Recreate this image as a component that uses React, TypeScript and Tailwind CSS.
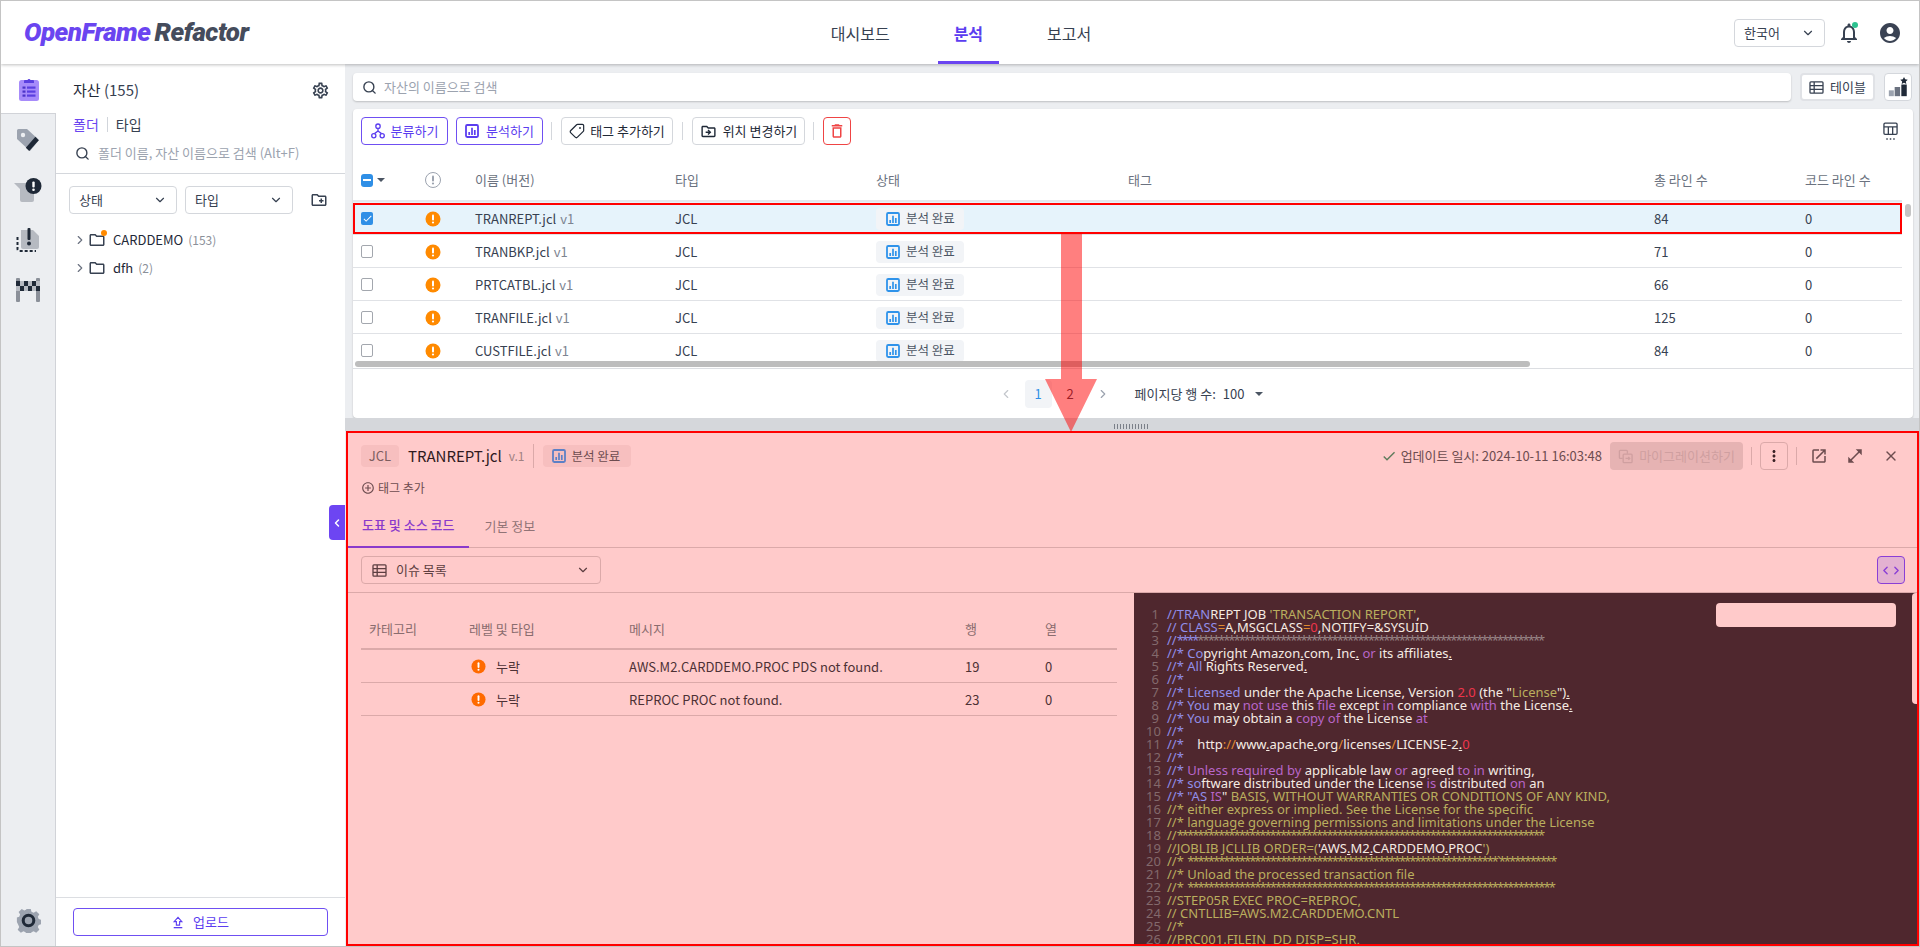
import React from 'react';
import { ChevronDown, ChevronLeft, ChevronRight, Search, Tag, X } from 'lucide-react';
import {
  MdAccountCircle,
  MdCheck,
  MdMoreVert,
  MdOpenInFull,
  MdOpenInNew,
  MdOutlineAddCircleOutline,
  MdOutlineCreateNewFolder,
  MdOutlineDelete,
  MdOutlineDriveFileMove,
  MdOutlineFolder,
  MdOutlineNotifications,
  MdOutlineSettings,
} from 'react-icons/md';

const FONT = '[font-family:"Noto_Sans_CJK_KR","Noto_Sans",sans-serif]';

type IconProps = { className?: string };

const AlertDot: React.FC<IconProps> = ({ className = 'w-4 h-4 ml-[2px] text-[#ff8a00]' }) => (
  <svg viewBox="0 0 16 16" className={className}>
    <circle cx="8" cy="8" r="7.5" fill="currentColor" />
    <rect x="7" y="3.5" width="2" height="6" rx="1" fill="#fff" />
    <circle cx="8" cy="11.5" r="1.1" fill="#fff" />
  </svg>
);

const BarsSquare: React.FC<IconProps> = ({ className = 'w-[14px] h-[14px] text-[#2f93ea]' }) => (
  <svg viewBox="0 0 14 14" className={className} fill="none">
    <rect x="1" y="1" width="12" height="12" rx="1.2" stroke="currentColor" strokeWidth="1.8" />
    <path d="M4.2 11V8M7 11V3.800M9.800 11V6" stroke="currentColor" strokeWidth="1.700" />
  </svg>
);

const TreeIcon: React.FC<IconProps> = ({ className }) => (
  <svg viewBox="0 0 16 18" className={className} fill="none" stroke="currentColor" strokeWidth="1.5">
    <circle cx="8" cy="3.5" r="2.5" />
    <circle cx="3.2" cy="14.5" r="2.4" />
    <circle cx="12.8" cy="14.5" r="2.4" />
    <path d="M8 6v3M4 12l4-3 4 3" />
  </svg>
);

const TableIcon: React.FC<IconProps> = ({ className }) => (
  <svg viewBox="0 0 16 14" className={className} fill="none" stroke="currentColor" strokeWidth="1.4">
    <rect x="1" y="1" width="14" height="12" rx="1" />
    <path d="M1 5h14M1 9h14M5.5 1v12" />
  </svg>
);

const ColumnsIcon: React.FC<IconProps> = ({ className }) => (
  <svg viewBox="0 0 16 20" className={className} fill="none" stroke="currentColor" strokeWidth="1.4">
    <rect x="1" y="1" width="14" height="12" rx="1.2" />
    <path d="M1 5h14M5.7 5v8M10.3 5v8" />
    <path d="M3.5 18h1.6M7.2 18h1.6M10.9 18h1.6" strokeWidth="1.6" />
  </svg>
);

const RankIcon: React.FC<IconProps> = ({ className }) => (
  <svg viewBox="0 0 24 24" className={className}>
    <rect x="1" y="16" width="6" height="7" fill="#9ca3af" />
    <rect x="8" y="12" width="6.500" height="11" fill="#6b7280" />
    <rect x="16" y="9" width="6.500" height="14" fill="#1f2937" />
    <path d="m19.200 0 1.400 2.800 3.100.4-2.300 2.200.6 3.100-2.800-1.500-2.800 1.500.6-3.100-2.300-2.200 3.100-.4z" fill="#1f2937" />
  </svg>
);

const UploadIcon: React.FC<IconProps> = ({ className }) => (
  <svg viewBox="0 0 14 14" className={className} fill="none" stroke="currentColor" strokeWidth="1.3">
    <path d="M7 1 2.5 6h2.6v4h3.8V6h2.6z" />
    <path d="M2 13h10" strokeWidth="1.5" />
  </svg>
);

const CopyMove: React.FC<IconProps> = ({ className }) => (
  <svg viewBox="0 0 16 16" className={className} fill="none" stroke="currentColor" strokeWidth="1.4">
    <path d="M10 5V2.5A1 1 0 0 0 9 1.5H2.5a1 1 0 0 0-1 1V9a1 1 0 0 0 1 1H5" />
    <rect x="5.5" y="5.5" width="9.5" height="9" rx="1" />
    <path d="M8 10h4.5M11 8.5l1.5 1.5L11 11.5" />
  </svg>
);

const ClipboardNav = () => (
  <svg viewBox="0 0 22 24" className="w-[22px] h-6">
    <rect x="1" y="3" width="20" height="21" rx="2.5" fill="#a78bfa" />
    <path d="M7 3h2.5a1.6 1.6 0 0 1 3 0H15a1 1 0 0 1 1 1v2H6V4a1 1 0 0 1 1-1z" fill="#5b3fe0" />
    <rect x="4.5" y="9.5" width="3" height="2.2" fill="#4c34c8" />
    <rect x="4.5" y="13.5" width="3" height="2.2" fill="#4c34c8" />
    <rect x="4.5" y="17.5" width="3" height="2.2" fill="#4c34c8" />
    <rect x="9" y="9.5" width="8.5" height="2.2" fill="#5b3fe0" />
    <rect x="9" y="13.5" width="8.5" height="2.2" fill="#5b3fe0" />
    <rect x="9" y="17.5" width="8.5" height="2.2" fill="#5b3fe0" />
  </svg>
);

const TagNav = () => (
  <svg viewBox="0 0 24 24" className="w-6 h-6">
    <path d="M1 2.500A1.500 1.500 0 0 1 2.500 1h8.500l12 11-9 11L1 11z" fill="#9ca3af" />
    <circle cx="7" cy="7" r="2.200" fill="#eceef1" />
    <path d="m13.200 23-3.400-3.200 9.600-11 3.400 3.400z" fill="#1f2937" />
  </svg>
);

const IssueNav = () => (
  <svg viewBox="0 0 28 24" className="w-7 h-6">
    <path d="M0 5h20v17a2 2 0 0 1-2 2H8a2 2 0 0 1-2-2V11z" fill="#b6bac1" />
    <circle cx="19.500" cy="8" r="8" fill="#1f2937" />
    <rect x="18.300" y="3.400" width="2.400" height="6" rx="1" fill="#fff" />
    <circle cx="19.500" cy="11.700" r="1.300" fill="#fff" />
  </svg>
);

const DashedNav = () => (
  <svg viewBox="0 0 24 24" className="w-6 h-6">
    <path d="M5 2h12l6 6v11a2 2 0 0 1-2 2H7a2 2 0 0 1-2-2z" fill="#b6bac1" />
    <path d="M1.500 9v12a2 2 0 0 0 2 2H20" fill="none" stroke="#1f2937" strokeWidth="2" strokeDasharray="3 2" />
    <rect x="11.500" y="0" width="3" height="12" rx="1" fill="#1f2937" />
    <circle cx="13" cy="15.500" r="2" fill="#1f2937" />
  </svg>
);

const FlagNav = () => (
  <svg viewBox="0 0 24 24" className="w-6 h-6">
    <rect x="0" y="0" width="4" height="24" rx="1" fill="#8b9099" />
    <rect x="20" y="0" width="4" height="24" rx="1" fill="#8b9099" />
    <rect x="0" y="3" width="24" height="10" fill="#b6bac1" />
    <path d="M0 3h4v5H0zM8 3h4v5H8zM16 3h4v5h-4zM4 8h4v5H4zM12 8h4v5h-4zM20 8h4v5h-4z" fill="#1f2937" />
  </svg>
);

const GearNav = () => (
  <svg viewBox="0 0 26 26" className="w-[25px] h-[25px]">
    <path
      d="M10.500 1h5l.8 3.200 2.400 1 2.900-1.700 3.500 3.600-1.700 2.800 1 2.500 2.600.7v5l-2.600.8-1 2.400 1.700 2.900-3.500 3.500-2.900-1.700-2.400 1-.8 2.500h-5l-.8-2.500-2.400-1-2.900 1.700-3.500-3.500 1.700-2.900-1-2.400L0 15.600v-5l2.600-.7 1-2.500L1.900 4.600l3.500-3.600 2.900 1.700 2.400-1z"
      fill="#9ca3af"
      transform="scale(.93) translate(1 0)"
    />
    <circle cx="13" cy="13" r="5.500" fill="none" stroke="#1f2937" strokeWidth="3.200" />
  </svg>
);

const railItems = [<TagNav key="t" />, <IssueNav key="i" />, <DashedNav key="d" />, <FlagNav key="f" />];

const StatusChip = () => (
  <span className="inline-flex items-center gap-[6px] w-[88px] h-[22px] pl-[10px] rounded bg-[#f2f4f7] text-[12.5px] text-[#4b5563]">
    <BarsSquare />
    분석 완료
  </span>
);

const SelectBox: React.FC<{ label: string; className: string }> = ({ label, className }) => (
  <div className={`flex items-center justify-between h-7 px-[9px] bg-white border border-[#d4d7dc] rounded text-[13px] text-[#374151] ${className}`}>
    {label}
    <ChevronDown className="w-[14px] h-[14px] text-[#374151]" strokeWidth={2} />
  </div>
);

const GRID = 'grid grid-cols-[70px_52px_200px_201px_252px_526px_151px_97px] items-center';
const ISSUE_GRID = 'grid grid-cols-[108px_160px_336px_80px_72px] items-center w-[756px]';

const assets = [
  { name: 'TRANREPT.jcl', lines: '84' },
  { name: 'TRANBKP.jcl', lines: '71' },
  { name: 'PRTCATBL.jcl', lines: '66' },
  { name: 'TRANFILE.jcl', lines: '125' },
  { name: 'CUSTFILE.jcl', lines: '84' },
];

const issues = [
  { msg: 'AWS.M2.CARDDEMO.PROC PDS not found.', row: '19' },
  { msg: 'REPROC PROC not found.', row: '23' },
];

const P = 'text-[#918ee8]';
const W = 'text-[#f5ebe3]';
const Y = 'text-[#baae5e]';
const R = 'text-[#f0354b]';
const M = 'text-[#b866c9]';
const O = 'text-[#e08a30]';
const U = 'text-[#f5ebe3] underline';
// the asterisks in the editor font are much narrower
const PS = 'text-[#918ee8] tracking-[-2px]';
const GS = 'text-[#978486] tracking-[-2px]';
const YS = 'text-[#baae5e] tracking-[-2px]';

const stars = (n: number) => '*'.repeat(n);

const codeLines: [string, string][][] = [
  [['//TRAN', P], ['REPT JOB ', W], ["'TRANSACTION REPORT'", Y], [',', W]],
  [['// CLASS', P], ['=', O], ['A,MSGCLASS', W], ['=', O], ['0', R], [',NOTIFY=&SYSUID', W]],
  [['//', P], ['****', PS], [stars(67), GS]],
  [['//* Co', P], ['pyright Amazon', W], ['.', U], ['com, Inc', W], ['.', U], [' ', W], ['or', M], [' its affiliates', W], ['.', U]],
  [['//* All ', P], ['Rights Reserved', W], ['.', U]],
  [['//*', P]],
  [['//* Licensed', P], [' under the Apache License, Version ', W], ['2.0', R], [' (the "', W], ['License', Y], ['")', W], ['.', U]],
  [['//* You ', P], ['may ', W], ['not use', M], [' this ', W], ['file', M], [' except ', W], ['in', M], [' compliance ', W], ['with', M], [' the License', W], ['.', U]],
  [['//* You ', P], ['may obtain a ', W], ['copy of', M], [' the License ', W], ['at', M]],
  [['//*', P]],
  [['//*', P], ['    http', W], ['://', O], ['www', W], ['.', U], ['apache', W], ['.', U], ['org', W], ['/', O], ['licenses', W], ['/', O], ['LICENSE-2', W], ['.', U], ['0', R]],
  [['//*', P]],
  [['//* ', P], ['Unless required by', M], [' applicable law ', W], ['or', M], [' agreed ', W], ['to in', M], [' writing,', W]],
  [['//* so', P], ['ftware distributed under the License ', W], ['is', M], [' distributed ', W], ['on', M], [' an', W]],
  [['//* "AS ', P], ['IS', M], ['" ', W], ['BASIS, WITHOUT WARRANTIES OR CONDITIONS OF ANY KIND,', Y]],
  [['//* either express or implied. See the License for the specific', Y]],
  [['//* language governing permissions and limitations under the License', Y]],
  [['//', Y], [stars(71), YS]],
  [['//JOBLIB JCLLIB ORDER=(', Y], ["'AWS", W], ['.', U], ['M2', W], ['.', U], ['CARDDEMO', W], ['.', U], ['PROC', W], ["')", Y]],
  [['//* ', Y], [stars(60) + '`' + stars(11), YS]],
  [['//* Unload the processed transaction file', Y]],
  [['//* ', Y], [stars(71), YS]],
  [['//STEP05R EXEC PROC=REPROC,', Y]],
  [['// CNTLLIB=AWS.M2.CARDDEMO.CNTL', Y]],
  [['//*', Y]],
  [['//PRC001.FILEIN  DD DISP=SHR,', Y]],
];

const App: React.FC = () => {
  return (
    <div className={`relative w-[1920px] h-[947px] flex flex-col overflow-hidden border border-[#c4c4c4] bg-white ${FONT}`}>
      {/* Top navigation */}
      <header className="relative z-10 flex items-center h-[63px] shrink-0 bg-white shadow-[0_1px_3px_rgba(0,0,0,0.25)]">
        <div className="flex-1 pl-[23px] text-[26px] font-black italic tracking-[-0.5px] [font-family:Roboto,sans-serif]">
          <span className="text-[#6a45f0]">OpenFrame</span>
          <span className="text-[#454c5c] ml-[4px]">Refactor</span>
        </div>
        <nav className="flex items-stretch self-stretch gap-[32px] mr-[4px] text-[16px] text-[#374151]">
          <a className="flex items-center px-4">대시보드</a>
          <a className="flex items-center px-4 font-bold text-[#5b3df0] border-b-[3px] border-[#6a45f0] pt-[3px]">분석</a>
          <a className="flex items-center px-4">보고서</a>
        </nav>
        <div className="flex-1 flex items-center justify-end pr-[17px]">
          <SelectBox label="한국어" className="w-[91px]" />
          <div className="relative ml-[12px]">
            <MdOutlineNotifications className="w-6 h-6 text-[#374151]" />
            <span className="absolute top-[1px] right-[3px] w-[6px] h-[6px] rounded-full bg-[#2cc28f]" />
          </div>
          <MdAccountCircle className="w-6 h-6 ml-[17px] text-[#3a4253]" />
        </div>
      </header>

      <div className="flex flex-1 min-h-0">
        {/* Icon rail */}
        <aside className="flex flex-col w-[55px] shrink-0 bg-[#eceef1] border-r border-[#d1d3d8]">
          <div className="flex items-center justify-center h-[50px] -mr-px bg-white border-b border-[#d1d3d8]">
            <ClipboardNav />
          </div>
          <div className="flex flex-col items-center gap-[26px] pt-[14px]">{railItems}</div>
          <div className="mt-auto flex justify-center pb-[13px]">
            <GearNav />
          </div>
        </aside>

        {/* Asset tree panel */}
        <aside className="relative flex flex-col w-[289px] shrink-0 bg-white">
          <div className="flex items-center justify-between h-6 mt-[14px] pl-[17px] pr-[15px]">
            <span className="text-[15px] text-[#1f2937]">
              자산 <span className="text-[#374151]">(155)</span>
            </span>
            <MdOutlineSettings className="w-[19px] h-[19px] text-[#374151]" />
          </div>
          <div className="flex items-center h-5 mt-[12px] pl-[17px] text-[14px]">
            <span className="text-[#6a45f0]">폴더</span>
            <span className="w-px h-[15px] mx-[8px] bg-[#d1d5db]" />
            <span className="text-[#374151]">타입</span>
          </div>
          <div className="flex items-center gap-[8px] h-[38px] mt-[2px] pl-[19px] border-b border-[#d4d7dc] pb-[3px] text-[13px] text-[#9ca3af]">
            <Search className="w-[15px] h-[15px] text-[#374151]" strokeWidth={2.2} />
            폴더 이름, 자산 이름으로 검색 (Alt+F)
          </div>
          <div className="flex items-center mt-[12px] pl-[13px]">
            <SelectBox label="상태" className="w-[108px]" />
            <SelectBox label="타입" className="w-[108px] ml-[8px]" />
            <MdOutlineCreateNewFolder className="w-[18px] h-[18px] ml-[17px] text-[#374151]" />
          </div>
          <div className="mt-[12px] pl-[17px] text-[13px] text-[#1f2937]">
            <div className="flex items-center h-7">
              <ChevronRight className="w-[14px] h-[14px] text-[#6b7280]" />
              <span className="relative ml-[1px]">
                <MdOutlineFolder className="block w-[18px] h-[18px] text-[#374151]" />
                <span className="absolute -top-px right-[-1px] w-[6px] h-[6px] rounded-full bg-[#ff8a00]" />
              </span>
              <span className="ml-[7px]">CARDDEMO</span>
              <span className="ml-[5px] text-[12px] text-[#8b9099]">(153)</span>
            </div>
            <div className="flex items-center h-7">
              <ChevronRight className="w-[14px] h-[14px] text-[#6b7280]" />
              <MdOutlineFolder className="w-[18px] h-[18px] ml-[1px] text-[#374151]" />
              <span className="ml-[7px]">dfh</span>
              <span className="ml-[5px] text-[12px] text-[#8b9099]">(2)</span>
            </div>
          </div>
          <div className="mt-auto px-[17px] py-[10px] border-t border-[#dcdee2]">
            <div className="flex items-center justify-center gap-[9px] h-7 rounded border border-[#6f4ff2] text-[13px] text-[#5b3df0]">
              <UploadIcon className="w-[12px] h-[13px]" />
              업로드
            </div>
          </div>
          <div className="absolute right-0 top-[441px] flex items-center justify-center w-[16px] h-[35px] rounded-l bg-[#6d45f2] text-white">
            <ChevronLeft className="w-3 h-3" strokeWidth={3} />
          </div>
        </aside>

        {/* Main */}
        <main className="flex flex-col flex-1 min-w-0 bg-[#eceef1]">
          <div className="flex items-center gap-[9px] pt-[9px] pl-[8px] pr-[7px]">
            <div className="flex items-center flex-1 gap-[7px] h-7 px-[9px] bg-white rounded shadow-[0_1px_2px_rgba(0,0,0,0.2)] text-[13px] text-[#9ca3af]">
              <Search className="w-[15px] h-[15px] text-[#374151]" strokeWidth={2.2} />
              자산의 이름으로 검색
            </div>
            <div className="flex items-center justify-center gap-[6px] w-[75px] h-7 bg-white rounded border-2 border-[#e0e2e6] text-[13px] text-[#374151]">
              <TableIcon className="w-[15px] h-[13px]" />
              테이블
            </div>
            <div className="flex items-center justify-center w-7 h-7 bg-white rounded border border-[#d4d7dc]">
              <RankIcon className="w-[20px] h-[20px]" />
            </div>
          </div>

          <section className="flex flex-col h-[309px] mt-[8px] ml-[8px] mr-[6px] bg-white rounded shadow-[0_1px_2px_rgba(0,0,0,0.2)]">
            <div className="flex items-center h-7 mt-[8px] px-[8px] text-[13px]">
              <div className="flex items-center justify-center gap-[6px] w-[87px] h-7 rounded border border-[#6f4ff2] text-[#5b3df0]">
                <TreeIcon className="w-[14px] h-[16px]" />
                분류하기
              </div>
              <div className="flex items-center justify-center gap-[7px] w-[87px] h-7 ml-[8px] rounded border border-[#6f4ff2] text-[#5b3df0]">
                <BarsSquare className="w-[14px] h-[14px] text-[#5b3df0]" />
                분석하기
              </div>
              <span className="w-px h-[18px] ml-[8px] mr-[9px] bg-[#d4d7dc]" />
              <div className="flex items-center justify-center gap-[5px] w-[112px] h-7 rounded border border-[#d4d7dc] text-[#1f2937]">
                <Tag className="w-[16px] h-[16px] -scale-x-100" strokeWidth={1.8} />
                태그 추가하기
              </div>
              <span className="w-px h-[18px] mx-[9px] bg-[#d4d7dc]" />
              <div className="flex items-center justify-center gap-[6px] w-[113px] h-7 rounded border border-[#d4d7dc] text-[#1f2937]">
                <MdOutlineDriveFileMove className="w-[17px] h-[17px]" />
                위치 변경하기
              </div>
              <span className="w-px h-[18px] ml-[8px] mr-[9px] bg-[#d4d7dc]" />
              <div className="flex items-center justify-center w-7 h-7 rounded border border-[#ef4444] text-[#ef4444]">
                <MdOutlineDelete className="w-[18px] h-[18px]" />
              </div>
              <ColumnsIcon className="w-[15px] h-[19px] ml-auto mr-[7px] text-[#374151]" />
            </div>

            <div className={`${GRID} w-[1549px] h-[48px] mt-[9px] pt-[6px] border-b-[2px] border-[#e5e7eb] text-[13px] text-[#6b7280]`}>
              <div className="flex items-center gap-[4px] pl-[8px]">
                <span className="flex items-center justify-center w-[12px] h-[13px] rounded-[3px] bg-[#2f8fe6]">
                  <span className="w-[8px] h-[2px] bg-white" />
                </span>
                <span className="w-0 h-0 border-x-[4px] border-x-transparent border-t-[4px] border-t-[#4b5563]" />
              </div>
              <AlertDot className="w-4 h-4 ml-[2px] text-[#9ca3af] [&_circle:first-child]:fill-transparent [&_circle:first-child]:stroke-current [&_rect]:fill-current [&_circle:last-child]:fill-current" />
              <span>이름 (버전)</span>
              <span>타입</span>
              <span>상태</span>
              <span>태그</span>
              <span>총 라인 수</span>
              <span>코드 라인 수</span>
            </div>

            <div className="flex h-[159px] overflow-hidden">
              <div className="w-[1549px] shrink-0 text-[13px] text-[#374151]">
                {assets.map((a, i) => (
                  <div
                    key={a.name}
                    className={`${GRID} relative h-[33px] pt-px shrink-0 border-b border-[#e0e2e6] ${i === 0 ? 'bg-[#e6f3fb]' : ''}`}
                  >
                    <div className="pl-[8px]">
                      {i === 0 ? (
                        <span className="flex items-center justify-center w-[12px] h-[13px] rounded-[2px] bg-[#2f8fe6] text-white">
                          <MdCheck className="w-[11px] h-[11px]" />
                        </span>
                      ) : (
                        <span className="block w-[12px] h-[13px] rounded-[2px] border border-[#a3a7ae] bg-white" />
                      )}
                    </div>
                    <AlertDot />
                    <span>
                      {a.name} <span className="ml-[1px] text-[#7d8490]">v1</span>
                    </span>
                    <span>JCL</span>
                    <StatusChip />
                    <span />
                    <span>{a.lines}</span>
                    <span>0</span>
                    {i === 0 && <span className="absolute inset-x-0 top-[1px] h-[31px] border-2 border-[#ff0000]" />}
                  </div>
                ))}
              </div>
              <div className="flex-1 pl-[3px] pt-[2px]">
                <div className="w-[6px] h-[13px] rounded-full bg-[#c4c4c4]" />
              </div>
            </div>

            <div className="h-[8px] pl-[2px] border-b border-[#dcdee2]">
              <div className="w-[1175px] h-[6px] rounded-full bg-[#bdbdbd]" />
            </div>

            <div className="flex flex-1 items-center justify-center pr-[10px] text-[13px] text-[#374151]">
              <ChevronLeft className="w-[14px] h-[14px] mx-[6px] text-[#c4c7cc]" />
              <span className="flex items-center justify-center w-[27px] h-7 ml-[6px] rounded bg-[#f2f4f7] text-[#2f8fe6]">1</span>
              <span className="flex items-center justify-center w-[27px] h-7 ml-[5px]">2</span>
              <ChevronRight className="w-[14px] h-[14px] ml-[12px] text-[#9ca3af]" />
              <span className="ml-[25px]">페이지당 행 수:</span>
              <span className="ml-[7px]">100</span>
              <span className="ml-[11px] w-0 h-0 border-x-[4px] border-x-transparent border-t-[4px] border-t-[#4b5563]" />
            </div>
          </section>

          {/* Resize handle */}
          <div className="flex items-center justify-center h-[13px] bg-[#d5d7db]">
            <span className="w-[36px] h-[5px] mt-[4px] bg-[repeating-linear-gradient(90deg,#7b8089_0,#7b8089_1px,transparent_1px,transparent_3px)]" />
          </div>

          {/* Detail panel */}
          <section className="flex flex-col flex-1 min-h-0 ml-[1px] bg-[#ffcaca] border-2 border-[#ff0000] text-[#3b2226]">
            <div className="flex items-center h-7 shrink-0 mt-[9px] pl-[13px] pr-[14px]">
              <span className="flex items-center justify-center w-[38px] h-[22px] rounded bg-[#f7bfbf] text-[13px] text-[#7d5d5f]">JCL</span>
              <span className="ml-[9px] text-[15px] text-[#2f1a1e]">TRANREPT.jcl</span>
              <span className="ml-[7px] text-[12px] text-[#a08081]">v.1</span>
              <span className="w-px h-[24px] ml-[8px] mr-[9px] bg-[#dba9a9]" />
              <span className="inline-flex items-center gap-[6px] w-[88px] h-[22px] pl-[9px] rounded bg-[#f7bfbf] text-[12.5px] text-[#6d4c4f]">
                <BarsSquare className="w-[14px] h-[14px] text-[#5d80c6]" />
                분석 완료
              </span>
              <div className="flex-1" />
              <MdCheck className="w-[16px] h-[16px] text-[#5c7a5a]" />
              <span className="ml-[4px] text-[13px] text-[#6d4c4f]">업데이트 일시: 2024-10-11 16:03:48</span>
              <span className="flex items-center justify-center gap-[6px] w-[133px] h-7 ml-[8px] rounded bg-[#e6b3b3] text-[13px] text-[#cf9fa0]">
                <CopyMove className="w-[15px] h-[15px]" />
                마이그레이션하기
              </span>
              <span className="w-px h-[18px] mx-[8px] bg-[#dba9a9]" />
              <span className="flex items-center justify-center w-7 h-7 rounded border border-[#dba9a9]">
                <MdMoreVert className="w-[18px] h-[18px]" />
              </span>
              <span className="w-px h-[18px] mx-[8px] bg-[#dba9a9]" />
              <MdOpenInNew className="w-[18px] h-[18px] ml-[5px] text-[#6d4c4f]" />
              <MdOpenInFull className="w-[18px] h-[18px] ml-[18px] text-[#6d4c4f]" />
              <X className="w-[16px] h-[16px] ml-[19px] mr-[4px] text-[#6d4c4f]" />
            </div>
            <div className="flex items-center gap-[3px] h-5 shrink-0 mt-[8px] pl-[13px] text-[12px] text-[#6d4c4f]">
              <MdOutlineAddCircleOutline className="w-[14px] h-[14px]" />
              태그 추가
            </div>
            <div className="flex items-stretch h-[50px] shrink-0 border-b border-[#dba9a9] text-[13px]">
              <span className="flex items-center px-[14px] pt-[6px] font-medium text-[#8a3acb] border-b-[2px] border-[#8a3acb] -mb-px">도표 및 소스 코드</span>
              <span className="flex items-center px-[16px] pt-[6px] text-[#917376]">기본 정보</span>
            </div>
            <div className="flex items-center justify-between h-[45px] shrink-0 pr-[12px] pl-[13px] border-b border-[#dba9a9]">
              <div className="flex items-center w-[240px] h-7 px-[10px] rounded border border-[#dba9a9] text-[13px] text-[#5d3e41]">
                <TableIcon className="w-[15px] h-[13px]" />
                <span className="ml-[9px]">이슈 목록</span>
                <ChevronDown className="w-[14px] h-[14px] ml-auto" />
              </div>
              <span className="flex items-center justify-center w-7 h-7 rounded border border-[#8a3fd6] bg-[#e3b1d1] text-[#8a3fd6]">
                <ChevronLeft className="w-[13px] h-[13px] -mr-px" strokeWidth={2.6} />
                <ChevronRight className="w-[13px] h-[13px] -ml-px" strokeWidth={2.6} />
              </span>
            </div>

            <div className="flex flex-1 min-h-0">
              <div className="w-[786px] shrink-0 pl-[13px] pt-[17px] text-[13px]">
                <div className={`${ISSUE_GRID} h-[40px] border-b-[2px] border-[#dba9a9] text-[#8a6c6e]`}>
                  <span className="pl-[8px]">카테고리</span>
                  <span>레벨 및 타입</span>
                  <span>메시지</span>
                  <span>행</span>
                  <span>열</span>
                </div>
                {issues.map((row) => (
                  <div key={row.row} className={`${ISSUE_GRID} h-[33px] pt-px border-b border-[#dba9a9] text-[#4d3135]`}>
                    <span />
                    <span className="flex items-center gap-[10px] pl-[2px]">
                      <AlertDot className="w-[15px] h-[15px] text-[#ff6a00]" />
                      누락
                    </span>
                    <span>{row.msg}</span>
                    <span>{row.row}</span>
                    <span>0</span>
                  </div>
                ))}
              </div>

              <div className="relative flex-1 min-w-0 overflow-hidden bg-[#4f272e] pt-[15px] pl-[12px] [font-family:'Noto_Sans',sans-serif] text-[13px] leading-[13px] whitespace-pre">
                {codeLines.map((tokens, i) => (
                  <div key={i} className="flex h-[13px]">
                    <span className="w-[13px] shrink-0 text-right text-[#83696c]">{i + 1}</span>
                    <span className="ml-[8px]">
                      {tokens.map(([text, color], j) => (
                        <span key={j} className={color}>{text}</span>
                      ))}
                    </span>
                  </div>
                ))}
                <div className="absolute top-[10px] right-[21px] w-[180px] h-6 rounded-sm bg-[#ffcaca]" />
                <div className="absolute top-0 right-0 w-[5px] h-[111px] rounded-l bg-[#ffcaca]" />
              </div>
            </div>
          </section>
        </main>
      </div>

      {/* Annotation arrow */}
      <svg viewBox="0 0 52 198" className="absolute left-[1044px] top-[233px] z-20 w-[52px] h-[198px]">
        <path d="M16 0h21v145h15L26 198 0 145h16z" fill="#ff0000" fillOpacity="0.5" />
      </svg>
    </div>
  );
};

export default App;
